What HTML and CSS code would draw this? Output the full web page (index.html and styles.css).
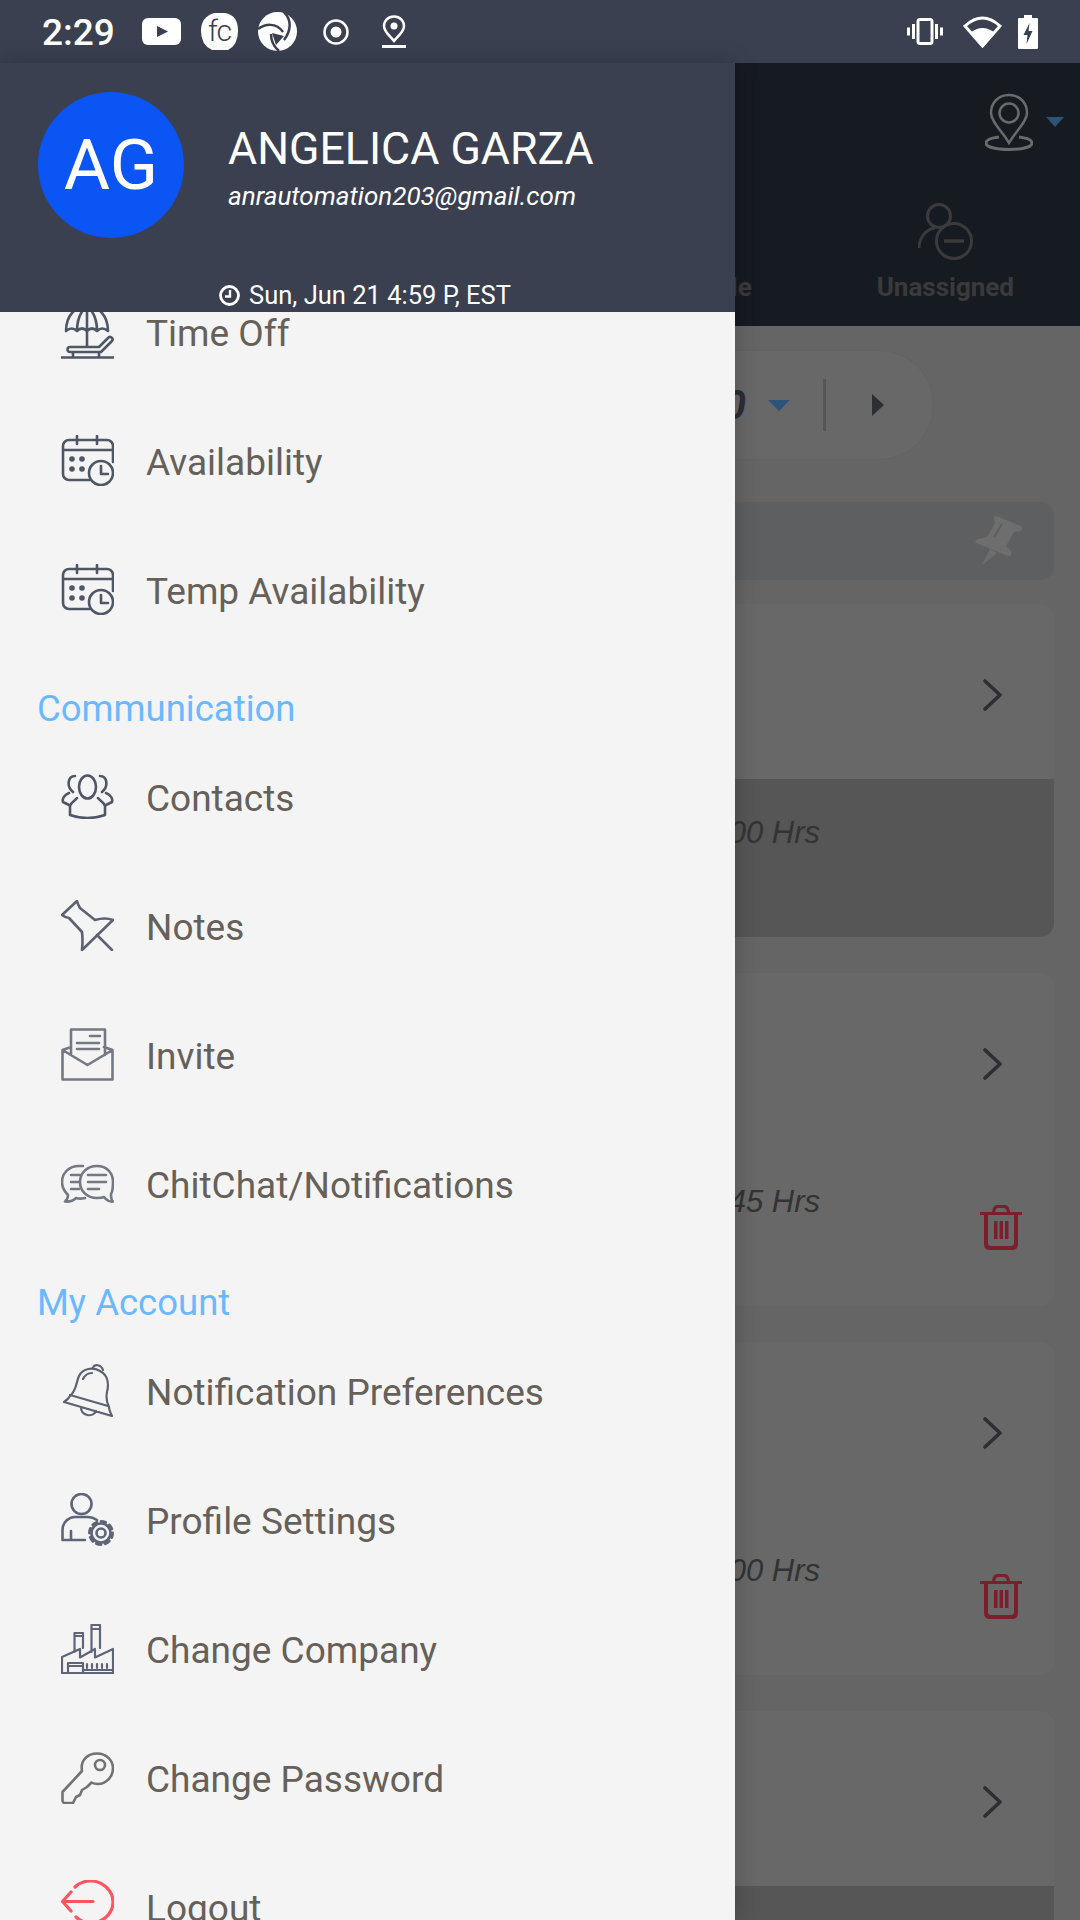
FILE: index.html
```html
<!DOCTYPE html>
<html lang="en">
<head>
<meta charset="utf-8">
<title>Menu</title>
<link rel="stylesheet" href="styles.css">
</head>
<body>
<svg class="defs" xmlns="http://www.w3.org/2000/svg">
  <symbol id="cal" viewBox="0 0 53 51">
    <path d="M29 45H8a6 6 0 0 1-6-6V11a6 6 0 0 1 6-6H46a6 6 0 0 1 6 6V27M16 1V9M36 1V9M2 15H52"/>
    <circle cx="40" cy="38" r="12"/>
    <path d="M40 31V39H47"/>
    <circle class="dot" cx="11" cy="24" r="2.8"/><circle class="dot" cx="21" cy="24" r="2.8"/>
    <circle class="dot" cx="11" cy="34" r="2.8"/><circle class="dot" cx="21" cy="34" r="2.8"/>
  </symbol>
  <symbol id="chev" viewBox="0 0 20 32"><path d="M2 2L17 16L2 30"/></symbol>
  <symbol id="trash" viewBox="0 0 42 46">
    <path class="t-fill" d="M0 8H42V11H38V40Q38 46 32 46H10Q4 46 4 40V11H0ZM8 11V39Q8 42 11 42H31Q34 42 34 39V11ZM14 17H17.500V35H14ZM19.500 17H23V35H19.500ZM25 17H28.500V35H25ZM12 8Q13 1 17 1H25Q29 1 30 8H27Q26 4 24 4H18Q16 4 15 8Z"/>
  </symbol>
</svg>

<header class="status">
  <span class="clock">2:29</span>
  <svg class="s-yt" viewBox="0 0 39 27"><rect width="39" height="27" rx="6" fill="#fff"/><path d="M15 8L26 13.500L15 19Z" fill="#3a4050"/></svg>
  <svg class="s-fc" viewBox="0 0 37 37"><path d="M13 0H24Q37 2 37 18Q37 32 27 37H11Q0 32 0 18Q0 4 13 0Z" fill="#fff"/><text x="7" y="28" class="fc-text">fc</text></svg>
  <svg class="s-sh" viewBox="0 0 39 39"><circle cx="19.500" cy="19.500" r="19.500" fill="#fff"/><path d="M0 17C7 12 18 10 25 20" fill="none" stroke="#3a4050" stroke-width="2.500"/><path d="M26 0C34 8 33 19 26 28" fill="none" stroke="#3a4050" stroke-width="2.500"/><path d="M13 22C13 29 15 34 21 39" fill="none" stroke="#3a4050" stroke-width="2.500"/><path d="M14 21L26 24L18 33Z" fill="#3a4050"/></svg>
  <svg class="s-rec" viewBox="0 0 26 26"><circle cx="13" cy="13" r="11.500" fill="none" stroke="#fff" stroke-width="2.500"/><circle cx="13" cy="13" r="5.500" fill="#fff"/></svg>
  <svg class="s-pin" viewBox="0 0 24 33"><path d="M12 1.500C6 1.500 2 6 2 11C2 17 9 22 12 26C15 22 22 17 22 11C22 6 18 1.500 12 1.500Z" fill="none" stroke="#fff" stroke-width="2.500"/><circle cx="12" cy="11" r="3.500" fill="#fff"/><path d="M0 31.500H24" stroke="#fff" stroke-width="3"/></svg>
  <span class="status-right">
    <svg class="s-vib" viewBox="0 0 36 27"><rect x="11" y="1.500" width="14" height="24" rx="2" fill="none" stroke="#fff" stroke-width="3"/><path d="M6.500 6V21M1.500 9.500V17.500M29.500 6V21M34.500 9.500V17.500" stroke="#fff" stroke-width="3"/></svg>
    <svg class="s-wifi" viewBox="0 0 39 33"><path d="M19.500 31L2 11Q19.500 -5 37 11Z" fill="none" stroke="#fff" stroke-width="3"/><path d="M19.500 33L7 18Q19.500 8 32 18Z" fill="#fff"/></svg>
    <svg class="s-bat" viewBox="0 0 20 34"><path d="M6 0H14V3H19Q20 3 20 4V33Q20 34 19 34H1Q0 34 0 33V4Q0 3 1 3H6Z" fill="#fff"/><path d="M11.500 8L5.500 20H9.500L8.500 29L14.500 16H10.500Z" fill="#3a4050"/></svg>
  </span>
</header>

<div class="screen">
  <section class="appbar">
    <div class="appbar-top">
      <svg class="loc" viewBox="0 0 48 58" fill="none" stroke="#6b6b6b" stroke-width="2.500">
        <path d="M24 2C12 2 6 11 6 20C6 29 18 39 24 50C30 39 42 29 42 20C42 11 36 2 24 2Z"/>
        <circle cx="24" cy="20" r="9.500"/>
        <path d="M14 44C6 45 1 47 1 50C1 54 11 56.500 24 56.500C37 56.500 47 54 47 50C47 47 42 45 34 44" stroke-width="3"/>
      </svg>
      <span class="caret caret-top"></span>
    </div>
    <div class="tabs">
      <span class="tab-label">le</span>
      <div class="tab">
        <svg class="tab-icon" viewBox="0 0 55 58" fill="none" stroke="#3b3b3d" stroke-width="3">
          <circle cx="21" cy="14" r="11.500"/>
          <path d="M1 46C1 36 8 27 17 26"/>
          <circle cx="36" cy="39" r="17.500"/>
          <path d="M26 39H46" stroke-width="3.500"/>
        </svg>
        <span class="tab-label">Unassigned</span>
      </div>
    </div>
  </section>

  <main class="content">
    <div class="pill">
      <span class="pill-val">0</span>
      <span class="caret caret-pill"></span>
      <span class="pill-div"></span>
      <span class="play"></span>
    </div>
    <div class="pinned">
      <svg class="pin" viewBox="0 0 48 51"><path d="M21 1L46 11Q49 14 45 16L39 17L31 31L36 36Q38 41 33 41L1 28Q-1 25 3 24L12 22L20 8L19 4Q19 1 21 1Z" fill="#6e6e6e"/><path d="M15 34L7 50L22 38Z" fill="#6e6e6e"/><path d="M27 9L19 22" stroke="#5d5f61" stroke-width="2"/></svg>
    </div>
    <article class="card">
      <div class="card-top"><svg class="chev"><use href="#chev"/></svg></div>
      <div class="card-bot card-bot-dark"><span class="hrs">00 Hrs</span></div>
    </article>
    <article class="card">
      <div class="card-top"><svg class="chev"><use href="#chev"/></svg></div>
      <div class="card-bot"><span class="hrs">45 Hrs</span><svg class="trash"><use href="#trash"/></svg></div>
    </article>
    <article class="card">
      <div class="card-top"><svg class="chev"><use href="#chev"/></svg></div>
      <div class="card-bot"><span class="hrs">00 Hrs</span><svg class="trash"><use href="#trash"/></svg></div>
    </article>
    <article class="card">
      <div class="card-top"><svg class="chev"><use href="#chev"/></svg></div>
      <div class="card-bot card-bot-dark"></div>
    </article>
  </main>
</div>

<aside class="drawer">
  <div class="d-head">
    <div class="d-user">
      <div class="avatar">AG</div>
      <div class="d-info">
        <div class="d-name">ANGELICA GARZA</div>
        <div class="d-mail">anrautomation203@gmail.com</div>
      </div>
    </div>
    <div class="d-date">
      <svg class="d-clock" viewBox="0 0 21 21" fill="none" stroke="#fff" stroke-width="2.800"><circle cx="10.500" cy="10.500" r="9"/><path d="M11 5V11.500H6" stroke-width="2.400"/></svg>
      <span>Sun, Jun 21 4:59 P, EST</span>
    </div>
  </div>
  <nav class="d-menu">
    <div class="d-list">
      <a class="row"><span class="ico"><svg class="i i-timeoff" viewBox="0 0 53 54"><path d="M5 26C5 10 15 1 26 1C37 1 47 10 47 26Q41 21 36 26Q31 21 26 26Q21 21 16 26Q11 21 5 26ZM16 26C16 14 20 6 26 1C32 6 36 14 36 26M26 1V42M9 47a2.500 2.500 0 0 1 0-5H38L47 33a2.300 2.300 0 0 1 4 3L40 47ZM12 47V52M38 47V52"/><path d="M0 52.500H53" stroke-dasharray="3 1"/></svg></span><span class="lbl">Time Off</span></a>
      <a class="row"><span class="ico"><svg class="i i-cal"><use href="#cal"/></svg></span><span class="lbl">Availability</span></a>
      <a class="row"><span class="ico"><svg class="i i-cal"><use href="#cal"/></svg></span><span class="lbl">Temp Availability</span></a>

      <h2 class="sec">Communication</h2>
      <a class="row"><span class="ico"><svg class="i i-contacts" viewBox="0 0 53 45"><ellipse cx="26.500" cy="13" rx="8.500" ry="11.500"/><path d="M16 24C13 28 10 28 9 32V41Q26.500 47 44 41V32C43 28 40 28 37 24M14 2C7 2 5 12 12 18M8 19C3 21 1 25 2 28L8 31M39 2C46 2 48 12 41 18M45 19C50 21 52 25 51 28L45 31"/></svg></span><span class="lbl">Contacts</span></a>
      <a class="row"><span class="ico"><svg class="i i-notes" viewBox="0 0 53 51"><path d="M16 1L1 15Q5 18 8 18L21 32Q22 40 21 50L52 20Q44 17 34 20L19 8Q17 5 16 1ZM36 35L51 50"/></svg></span><span class="lbl">Notes</span></a>
      <a class="row"><span class="ico"><svg class="i i-invite" viewBox="0 0 53 53"><path d="M1.500 22V51.500H51.500V22L26.500 37ZM10 19L1.500 22M43 19L51.500 22M10 27V1.500H44V27M29 8H39M16 15H38M16 21H38"/></svg></span><span class="lbl">Invite</span></a>
      <a class="row"><span class="ico"><svg class="i i-chit" viewBox="0 0 53 39"><path d="M22 2H18C8 2 1 9 1 18C1 24 4 28 7 31C7 34 6 36 4 37.500C9 38 13 36 15 34C18 35 20 35 24 34"/><path d="M36 2C26 2 19 9 19 18C19 27 26 34 36 34C38 34 41 34 43 33C45 36 49 38 52 37.500C50 36 50 34 50 30C52 27 52 23 52 18C52 9 46 2 36 2Z"/><path d="M27 11H45M27 18H45M27 25H38M10 11H19M10 18H18M10 25H18"/></svg></span><span class="lbl">ChitChat/Notifications</span></a>

      <h2 class="sec">My Account</h2>
      <a class="row"><span class="ico"><svg class="i i-bell" viewBox="0 0 53 53"><path d="M3 38L51 52M9 32C16 26 15 18 18 12C22 4 32 3 39 7C47 11 48 20 46 28C45 33 45 37 48 43M3 38C6 36 8 34 9 32M51 52C49 48 48 46 48 43M9 31L47 42M20 43C20 52 32 54 35 47M22 15C24 11 28 9 31 9M32 4C33 0 40 0 42 6"/></svg></span><span class="lbl">Notification Preferences</span></a>
      <a class="row"><span class="ico"><svg class="i i-profile" viewBox="0 0 53 54"><circle cx="20.500" cy="11" r="10"/><path d="M24 47H1.500V37C1.500 29 8 24 14 24H27C30 24 33 25 36 27M10 38V47"/><circle cx="40" cy="40" r="4.500"/><circle cx="40" cy="40" r="9.500"/><circle cx="40" cy="40" r="11.500" stroke-width="3" stroke-dasharray="4.500 4.500"/></svg></span><span class="lbl">Profile Settings</span></a>
      <a class="row"><span class="ico"><svg class="i i-factory" viewBox="0 0 53 50"><path d="M1 49V33L19 25V33.500L34 25V33.500L52 25V49ZM0 49.500H53M13.500 28V9H22V24M30.500 28V1H39V24M13.500 12H22M30.500 5H39M7 49V39H22V49M7 42H22M22 46H52M26 40V44M31 40V44M36 40V44M41 40V44M46 40V44"/></svg></span><span class="lbl">Change Company</span></a>
      <a class="row"><span class="ico"><svg class="i i-key" viewBox="0 0 53 52"><path d="M21 19C19 8 27 1.500 36 1.500C46 1.500 52 9 52 16C52 25 45 32 37 32C35 32 33 32 30.500 30.500L26 35L21 38L19 43L15 45L12 51H4Q1.500 51 1.500 48V40Z"/><circle cx="39" cy="13" r="5"/></svg></span><span class="lbl">Change Password</span></a>
      <a class="row"><span class="ico"><svg class="i i-logout" viewBox="0 0 53 54"><path d="M32 21.500H2M10 12L1.500 21.500L10 31M14 7C18 3 24 1 30 1C41 1 52 10 52 22C52 34 41 43 30 43C24 43 19 41 15 37"/></svg></span><span class="lbl">Logout</span></a>
    </div>
  </nav>
</aside>
</body>
</html>
```
FILE: styles.css
```css
* { box-sizing: border-box; }
html, body { margin: 0; padding: 0; }
body {
  width: 1080px;
  height: 1920px;
  position: relative;
  overflow: hidden;
  background: #656565;
  font-family: Roboto, "Liberation Sans", sans-serif;
}
.defs { display: none; }
svg { display: block; flex: none; }

/* status bar */
.status {
  height: 63px;
  background: #3a4050;
  display: flex;
  align-items: center;
  gap: 20px;
  padding: 0 42px 0 42px;
  color: #fff;
}
.clock { font-size: 37px; font-weight: 500; width: 80px; line-height: 63px; position: relative; top: 1px; }
.s-yt { width: 39px; height: 27px; }
.s-fc { width: 37px; height: 37px; }
.fc-text { font-family: Roboto, sans-serif; font-weight: 300; font-size: 30px; letter-spacing: -1px; fill: #3a4050; }
.s-sh { width: 39px; height: 39px; }
.s-rec { width: 26px; height: 26px; margin-left: 6px; }
.s-pin { width: 24px; height: 33px; margin-left: 13px; }
.status-right { margin-left: auto; display: flex; align-items: center; gap: 20px; }
.s-vib { width: 36px; height: 27px; }
.s-wifi { width: 39px; height: 33px; }
.s-bat { width: 20px; height: 34px; margin-left: -4px; }

/* dimmed app behind the drawer */
.appbar {
  height: 263px;
  background: #161a21;
  padding-top: 30px;
}
.appbar-top {
  display: flex;
  justify-content: flex-end;
  align-items: center;
  padding-right: 16px;
  gap: 13px;
  height: 58px;
}
.loc { width: 48px; height: 58px; }
.caret { width: 0; height: 0; display: block; border-style: solid; border-color: #2c5378 transparent transparent; }
.caret-top { border-width: 10px 9px 0; }
.tabs {
  display: flex;
  justify-content: flex-end;
  align-items: flex-end;
  gap: 125px;
  padding-right: 66px;
  margin-top: 51px;
}
.tab { display: flex; flex-direction: column; align-items: center; gap: 12px; }
.tab-icon { width: 55px; height: 58px; }
.tab-label { font-size: 26px; font-weight: 700; color: #3a3a3c; line-height: 30px; }

.content { padding: 24px 26px 0; }
.pill {
  height: 110px;
  margin-right: 120px;
  background: #686868;
  border: 1px solid #636363;
  border-radius: 0 55px 55px 0;
  display: flex;
  justify-content: flex-end;
  align-items: center;
  padding-right: 49px;
}
.pill-val { font-size: 40px; font-style: italic; font-weight: 700; color: #2d2e33; margin-right: 22px; }
.caret-pill { border-width: 11px 11px 0; margin-right: 33px; }
.pill-div { width: 3px; height: 52px; background: #565656; margin-right: 46px; }
.play { width: 0; height: 0; border-style: solid; border-width: 11px 0 11px 12px; border-color: transparent transparent transparent #2d2e33; }
.pinned {
  height: 78px;
  margin-top: 42px;
  background: #5d5f61;
  border-radius: 14px;
  display: flex;
  justify-content: flex-end;
  align-items: center;
  padding-right: 31px;
}
.pin { width: 48px; height: 51px; margin-top: -1px; }
.card {
  height: 333px;
  margin-top: 36px;
  background: #686868;
  border-radius: 14px;
  overflow: hidden;
  display: flex;
  flex-direction: column;
}
.pinned + .card { margin-top: 24px; }
.card-top {
  height: 175px;
  flex: none;
  display: flex;
  justify-content: flex-end;
  align-items: flex-start;
  padding: 75px 51px 0 0;
}
.chev { width: 20px; height: 32px; fill: none; stroke: #2d2e33; stroke-width: 3.600; stroke-linecap: round; stroke-linejoin: round; }
.card-bot { flex: 1; display: flex; justify-content: flex-end; align-items: flex-start; padding-right: 32px; }
.card-bot-dark { background: #565656; padding-right: 234px; }
.hrs {
  font-family: "Liberation Sans", Arial, sans-serif;
  font-style: italic;
  font-size: 31px;
  line-height: 36px;
  color: #333;
  margin-top: 36px;
}
.card-bot > .hrs:not(:last-child) { margin-right: 160px; }
.trash { width: 42px; height: 46px; margin-top: 56px; }
.t-fill { fill: #7c1f2d; }

/* drawer */
.drawer {
  position: absolute;
  left: 0;
  top: 63px;
  width: 735px;
  height: 1857px;
  background: #f4f4f4;
  display: flex;
  flex-direction: column;
  box-shadow: 0 0 22px rgba(0, 0, 0, .22);
}
.d-head { height: 249px; flex: none; background: #3a4050; color: #fff; position: relative; z-index: 1; }
.d-user { display: flex; align-items: center; padding: 29px 0 0 38px; }
.avatar {
  width: 146px;
  height: 146px;
  border-radius: 50%;
  background: #0b55f5;
  display: flex;
  align-items: center;
  justify-content: center;
  font-size: 71px;
  padding-bottom: 2px;
  flex: none;
}
.d-info { margin-left: 44px; padding-top: 5px; }
.d-name { font-size: 44.700px; line-height: 52px; }
.d-mail { font-size: 26px; font-style: italic; line-height: 32px; margin-top: 5px; }
.d-date { display: flex; align-items: center; justify-content: center; gap: 9px; font-size: 25.500px; line-height: 30px; margin-top: 42px; padding-right: 5px; }
.d-clock { width: 21px; height: 21px; }
.d-menu { flex: 1; overflow: hidden; min-height: 0; }
.d-list { margin-top: -45px; }
.row {
  height: 129px;
  display: flex;
  align-items: center;
  font-size: 37px;
  color: #66605a;
  padding-left: 61px;
}
.ico { width: 85px; flex: none; }
.lbl { position: relative; top: 2px; }
.i { width: 53px; fill: none; stroke: #4f5666; stroke-width: 2.600; stroke-linecap: round; stroke-linejoin: round; }
.dot { fill: #4f5666; stroke: none; }
.i-timeoff { height: 54px; }
.i-cal { height: 51px; }
.i-contacts { height: 45px; }
.i-notes { height: 51px; stroke: #5d6270; }
.i-invite { height: 53px; stroke: #747882; }
.i-chit { height: 39px; stroke: #747882; }
.i-bell { height: 53px; stroke: #5d6270; stroke-width: 2.200; }
.i-profile { height: 54px; stroke: #5d6577; }
.i-factory { height: 50px; stroke: #5d6577; stroke-width: 2.200; }
.i-key { height: 52px; stroke: #727272; }
.i-logout { height: 54px; stroke: #ff5464; stroke-width: 3.200; }
.sec {
  margin: 0;
  height: 78px;
  padding: 37px 0 0 37px;
  font-size: 36.500px;
  line-height: 36px;
  font-weight: 400;
  color: #6cb8ff;
}
```
